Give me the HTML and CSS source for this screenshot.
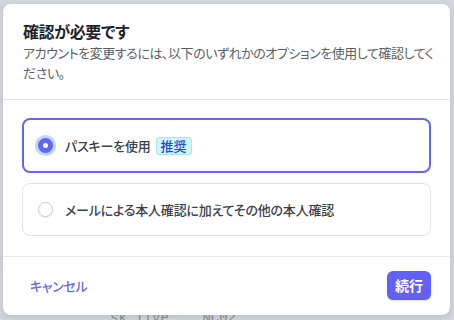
FILE: index.html
```html
<!DOCTYPE html>
<html lang="ja">
<head>
    <meta charset="UTF-8">
    <meta name="viewport" content="width=device-width, initial-scale=1.0">
    <title>確認が必要です</title>
    <link rel="stylesheet" href="styles.css">
</head>
<body>
    <div class="page">
        <div class="key-line">sk_live_...NC02</div>
    </div>

    <div class="modal">
        <div class="modal-header">
            <h2>確認が必要です</h2>
            <p>アカウントを変更するには、以下のいずれかのオプションを使用して確認してください。</p>
        </div>

        <div class="modal-body">
            <label class="option selected">
                <span class="radio"></span>
                <span class="option-text">パスキーを使用</span>
                <span class="badge">推奨</span>
            </label>
            <label class="option">
                <span class="radio"></span>
                <span class="option-text">メールによる本人確認に加えてその他の本人確認</span>
            </label>
        </div>

        <div class="modal-footer">
            <a class="btn-cancel">キャンセル</a>
            <a class="btn-primary">続行</a>
        </div>
    </div>
</body>
</html>
```

FILE: styles.css
```css
body, html {
    margin: 0;
    padding: 0;
    height: 100%;
    font-family: "Noto Sans CJK JP", "Noto Sans", sans-serif;
    font-feature-settings: "palt";
}

body {
    background-color: #d3d6db;
    position: relative;
    overflow: hidden;
}

.page {
    padding: 310px 0 0 110px;
}

.key-line {
    font-family: "Liberation Mono", monospace;
    font-size: 14px;
    color: #8b9098;
}

.modal {
    position: absolute;
    top: 4px;
    left: 3px;
    width: 447px;
    background-color: #fff;
    border-radius: 8px;
    box-shadow: 0 2px 6px rgba(0, 0, 0, .12);
}

.modal-header {
    padding: 15px 12px 16px 20px;
    border-bottom: 1px solid #e6e8ec;
}

.modal-header h2 {
    margin: 0;
    font-size: 16px;
    line-height: 24px;
    font-weight: 700;
    letter-spacing: -0.4px;
    color: #1f2328;
}

.modal-header p {
    margin: 0;
    font-size: 13px;
    line-height: 20px;
    letter-spacing: -0.45px;
    color: #5a5f66;
}

.modal-body {
    display: flex;
    flex-direction: column;
    gap: 10px;
    padding: 18px 19px 20px;
    border-bottom: 1px solid #e6e8ec;
}

.option {
    display: flex;
    align-items: center;
    padding: 16px 15px;
    border: 1px solid #e3e5e8;
    border-radius: 8px;
    font-size: 13px;
    line-height: 19px;
    font-weight: 500;
    letter-spacing: -0.2px;
    color: #3c4148;
}

.option.selected {
    border: 2px solid #6366f1;
    padding: 16px 14px;
}

.radio {
    width: 15px;
    height: 15px;
    box-sizing: border-box;
    border-radius: 50%;
    border: 1px solid #c9cdd3;
    background-color: #fff;
    box-shadow: 0 1px 1px rgba(0, 0, 0, .08);
    margin-right: 12px;
    flex-shrink: 0;
}

.option.selected .radio {
    border: 5px solid #6366f1;
    background-color: #fff;
    box-shadow: 0 0 0 3px #b9d8fa;
}

.badge {
    margin-left: 5px;
    padding: 0 4px;
    height: 18px;
    line-height: 16px;
    box-sizing: border-box;
    font-size: 13px;
    font-weight: 500;
    letter-spacing: 0;
    color: #1d4ed8;
    background-color: #cff4fc;
    border: 1px solid #a8e6f4;
    border-radius: 3px;
}

.modal-footer {
    display: flex;
    justify-content: space-between;
    align-items: center;
    padding: 14px 19px 15px;
}

.btn-cancel {
    padding: 0 8px;
    font-size: 13px;
    font-weight: 500;
    letter-spacing: -0.3px;
    color: #6366f1;
    cursor: pointer;
}

.btn-primary {
    height: 29px;
    line-height: 29px;
    padding: 0 8px;
    font-size: 14px;
    font-weight: 700;
    color: #fff;
    background-color: #6360f5;
    border-radius: 6px;
    box-shadow: 0 1px 2px rgba(0, 0, 0, .12);
    cursor: pointer;
}
```
